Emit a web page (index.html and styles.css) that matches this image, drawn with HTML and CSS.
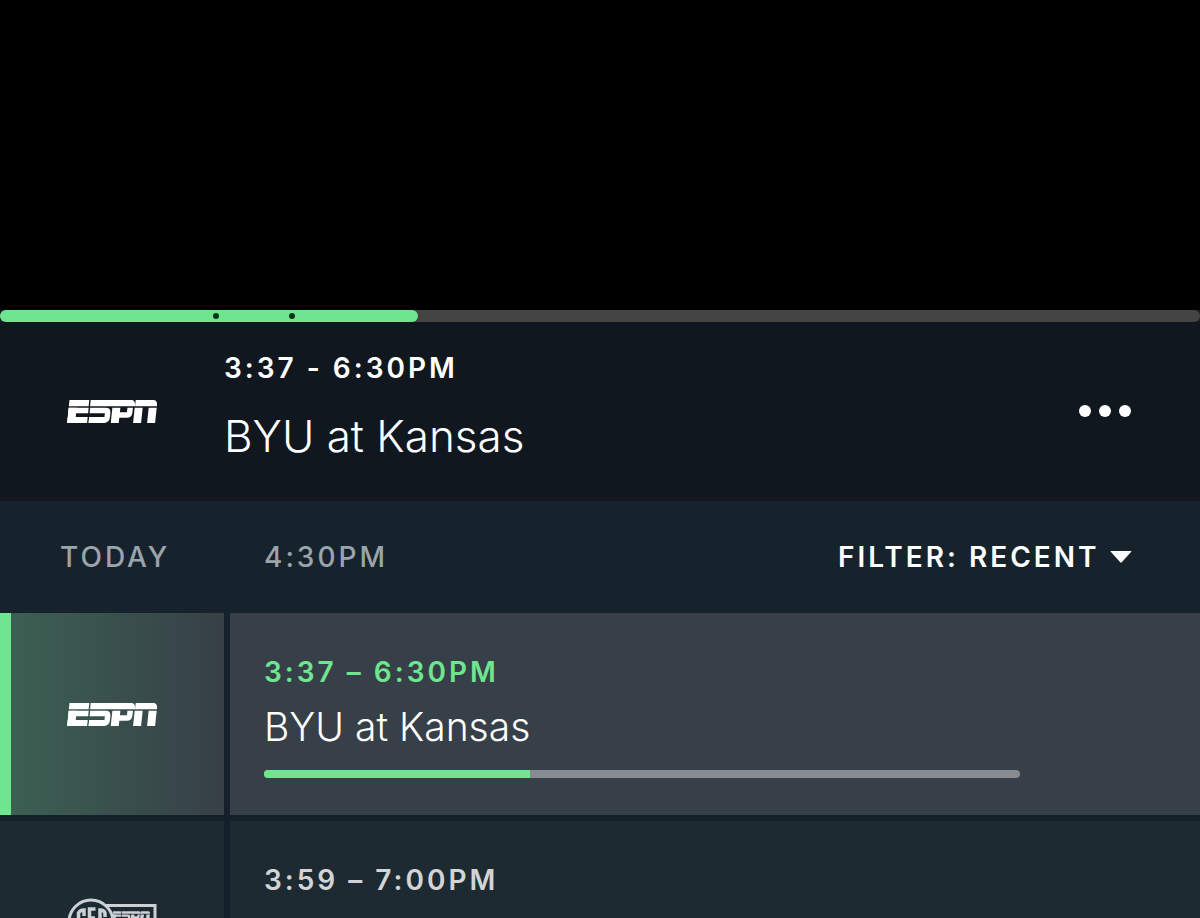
FILE: index.html
```
<!DOCTYPE html>
<html lang="en">
<head>
    <meta charset="UTF-8">
    <meta name="viewport" content="width=device-width, initial-scale=1.0">
    <title>Live Guide</title>
    <link rel="stylesheet" href="styles.css">
</head>
<body>

<!-- Shared logo artwork -->
<svg class="defs" aria-hidden="true">
    <symbol id="espn" viewBox="0 0 90 23">
        <g transform="translate(2.5 0) skewX(-6)" fill="none" stroke="currentColor">
            <path stroke-width="6.200" d="M0 3.100H19.800M21.200 3.100H62Q63 3.100 63 6.200M66.200 3.100H84Q85 3.100 85 6.200"/>
            <path stroke-width="5.500" d="M0 10.500H20M21.500 10.500H37Q39.500 10.500 39.500 13V17Q39.500 20 37 20H21.500M44 15H59Q61.500 15 61.500 12.500V7.800"/>
            <path stroke-width="6" d="M0 20H20M21.500 20H38"/>
            <path stroke-width="8" d="M4 7.800V23M47.700 7.800V23M70 7.800V23M84 7.800V23"/>
        </g>
    </symbol>
</svg>

<div class="app">
    <div class="video"></div>

    <div class="scrubber" role="progressbar" aria-label="Playback position" aria-valuenow="35">
        <div class="scrubber-fill" style="width: 34.8%"></div>
        <span class="marker" style="left: 18%"></span>
        <span class="marker" style="left: 24.3%"></span>
    </div>

    <header class="now-playing">
        <div class="channel">
            <svg class="espn" role="img" aria-label="ESPN"><use href="#espn"/></svg>
        </div>
        <div class="now-info">
            <div class="time">3:37 - 6:30PM</div>
            <h1>BYU at Kansas</h1>
        </div>
        <button class="more" type="button" aria-label="More options">
            <svg width="52" height="12" viewBox="0 0 52 12" fill="currentColor">
                <circle cx="6" cy="6" r="6"/>
                <circle cx="26" cy="6" r="6"/>
                <circle cx="46" cy="6" r="6"/>
            </svg>
        </button>
    </header>

    <div class="toolbar">
        <div class="day">TODAY</div>
        <div class="slot">4:30PM</div>
        <div class="filter">
            <label for="filter">FILTER:</label>
            <select id="filter">
                <option>RECENT</option>
            </select>
            <svg width="22" height="12" viewBox="0 0 22 12" fill="currentColor"><path d="M1 0H21Q22 0 21 1L12 11Q11 12 10 11L1 1Q0 0 1 0Z"/></svg>
        </div>
    </div>

    <main class="guide">
        <section class="row active">
            <div class="channel">
                <svg class="espn" role="img" aria-label="ESPN"><use href="#espn"/></svg>
            </div>
            <div class="program">
                <div class="time">3:37 – 6:30PM</div>
                <h2>BYU at Kansas</h2>
                <div class="progress" role="progressbar" aria-label="Program progress" aria-valuenow="35">
                    <div class="progress-fill" style="width: 35.2%"></div>
                </div>
            </div>
        </section>

        <section class="row">
            <div class="channel">
                <svg class="sec" viewBox="0 0 90 48" fill="none" stroke="currentColor" role="img" aria-label="SEC ESPN">
                    <circle cx="24" cy="24" r="22" stroke-width="3"/>
                    <path stroke-width="3" d="M38 7.500H88V40H38"/>
                    <g stroke-width="3.500">
                        <path d="M17 18V12Q13 12 11.500 15V20Q11.500 22 14 23Q17 25 17 28V36"/>
                        <path d="M28.500 11H22.500V38H28.500M22 20H28"/>
                        <path d="M38 19V15Q37 12 33 12V36Q37 36 38 31"/>
                    </g>
                    <use href="#espn" x="45" y="13" width="38" height="10"/>
                </svg>
            </div>
            <div class="program">
                <div class="time">3:59 – 7:00PM</div>
            </div>
        </section>
    </main>
</div>

</body>
</html>
```
FILE: styles.css
```
* {
    box-sizing: border-box;
}
body {
    margin: 0;
    background: #000;
    color: #fff;
    font-family: Inter, "Liberation Sans", sans-serif;
}
.defs {
    position: absolute;
    width: 0;
    height: 0;
}
.app {
    height: 100vh;
    overflow: hidden;
    background: #14202a;
}
.video {
    height: 310px;
    background: #000;
}

/* playback bar */
.scrubber {
    position: relative;
    height: 12px;
    background: #444;
    border-radius: 6px;
}
.scrubber-fill {
    height: 100%;
    background: #6ee58e;
    border-radius: 6px;
}
.marker {
    position: absolute;
    top: 3px;
    width: 6px;
    height: 6px;
    margin-left: -3px;
    background: #06351a;
    border-radius: 50%;
}

.channel {
    display: flex;
    flex: 0 0 224px;
    align-items: center;
    justify-content: center;
}
.espn {
    width: 90px;
    height: 23px;
}
.sec {
    width: 90px;
    height: 48px;
    color: #ccd1d5;
}
.time {
    font-size: 28px;
    font-weight: 600;
    line-height: 32px;
    letter-spacing: 3px;
}
h1, h2 {
    margin: 0;
    font-weight: 350;
}

/* now playing */
.now-playing {
    display: flex;
    align-items: center;
    min-height: 179px;
    padding-right: 69px;
    background: #10171f;
}
.now-info {
    flex: 1;
    padding-bottom: 8px;
}
h1 {
    margin-top: 24px;
    font-size: 44px;
    line-height: 56px;
}
.more {
    padding: 0 0 2px;
    border: 0;
    background: none;
    color: #fff;
    cursor: pointer;
}
.more svg {
    display: block;
}

/* day, time slot and filter */
.toolbar {
    display: flex;
    align-items: center;
    height: 112px;
    padding: 0 68px 0 60px;
    background: #16232d;
    color: #9ba4ab;
    font-size: 28px;
    font-weight: 500;
    letter-spacing: 3px;
}
.day {
    width: 204px;
}
.filter {
    display: flex;
    align-items: center;
    gap: 10px;
    margin-left: auto;
    color: #fff;
    font-weight: 600;
}
.filter select {
    appearance: none;
    padding: 0;
    border: 0;
    background: none;
    color: inherit;
    font: inherit;
    letter-spacing: inherit;
}

/* guide rows */
.guide {
    display: grid;
    gap: 6px;
}
.row {
    display: flex;
    gap: 6px;
    height: 202px;
}
.row .channel,
.program {
    background: #1e2a32;
}
.program {
    flex: 1;
    padding: 43px 180px 0 34px;
    color: #d2d5d7;
}
.active .channel {
    background: linear-gradient(to right, #3c6153, #374047);
    box-shadow: inset 11px 0 #6ee58e;
}
.active .program {
    background: #373f48;
    color: #fff;
}
.active .time {
    color: #6ee58e;
}
h2 {
    margin-top: 14px;
    font-size: 39px;
    line-height: 50px;
}
.progress {
    height: 8px;
    margin-top: 18px;
    overflow: hidden;
    background: #888c91;
    border-radius: 4px;
}
.progress-fill {
    height: 100%;
    background: #6ee58e;
}
```
